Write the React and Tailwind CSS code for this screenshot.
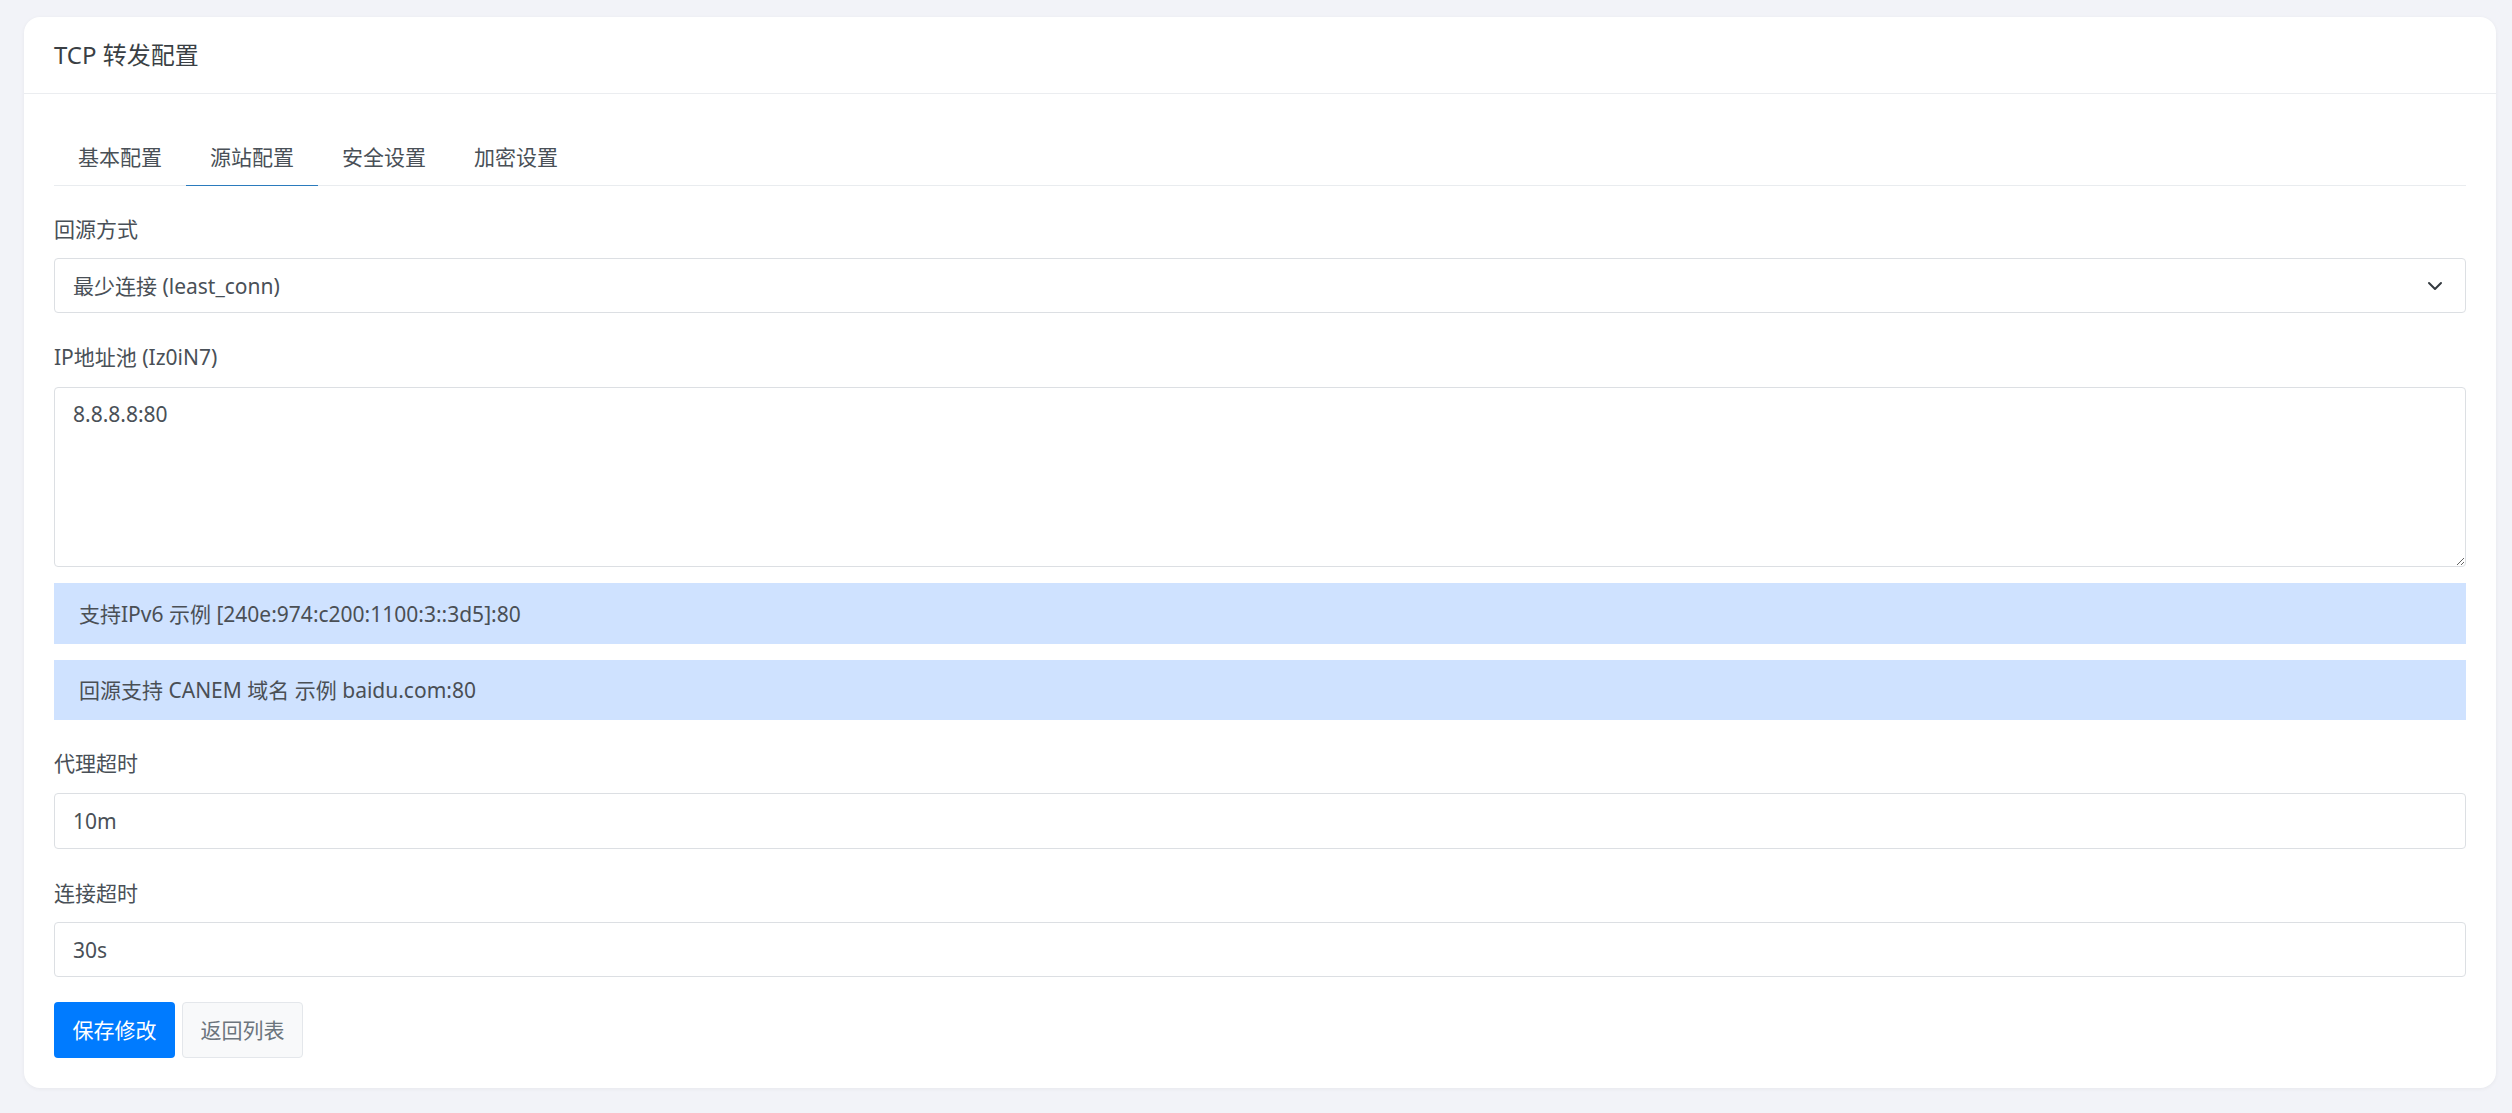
import React from "react";

const FONT = { fontFamily: '"Noto Sans", "Noto Sans CJK SC", sans-serif' };

function Label({ children, className = "" }) {
  return (
    <div className={`text-[21px] leading-[30px] text-[#495057] ${className}`}>{children}</div>
  );
}

export default function App() {
  const tabs = ["基本配置", "源站配置", "安全设置", "加密设置"];
  return (
    <div className="min-h-screen bg-[#f2f3f8] pt-[17px] pl-[24px] pr-[16px] pb-[25px]" style={FONT}>
      <div className="rounded-[16px] bg-white shadow-[0_1px_4px_rgba(0,0,0,0.05)]">
        <div className="border-b border-[#ebedf0] px-[30px] py-[20px] text-[24px] leading-[36px] text-[#3a3f44]">
          TCP 转发配置
        </div>
        <div className="px-[30px] pt-[35px] pb-[30px]">
          <div className="flex border-b border-[#e9ecef]">
            {tabs.map((t, i) => (
              <div
                key={t}
                className={
                  i === 1
                    ? "-mb-px border-b border-[#2b7bbd] px-[24px] py-[13px] text-[21px] leading-[30px] text-[#495057]"
                    : "px-[24px] py-[13px] text-[21px] leading-[30px] text-[#495057]"
                }
              >
                {t}
              </div>
            ))}
          </div>

          <Label className="mt-[28px]">回源方式</Label>
          <div className="relative mt-[14px]">
            <select
              defaultValue="least_conn"
              className="h-[55px] w-full appearance-none rounded-[4px] border border-[#dcdfe3] bg-white px-[18px] text-[21px] leading-[30px] text-[#495057] outline-none"
              style={FONT}
            >
              <option value="least_conn">最少连接 (least_conn)</option>
            </select>
            <svg
              className="pointer-events-none absolute right-[23px] top-[20px]"
              width="16"
              height="16"
              viewBox="0 0 16 16"
              fill="none"
              stroke="#343a40"
              strokeWidth="2"
              strokeLinecap="round"
              strokeLinejoin="round"
            >
              <path d="M2 5l6 6 6-6" />
            </svg>
          </div>

          <Label className="mt-[29px]">IP地址池 (Iz0iN7)</Label>
          <textarea
            defaultValue="8.8.8.8:80"
            className="mt-[15px] block h-[180px] w-full rounded-[4px] border border-[#dcdfe3] bg-white px-[18px] pt-[11px] text-[21px] leading-[30px] text-[#495057] outline-none"
            style={FONT}
          />

          <div className="mt-[16px] flex h-[61px] items-center bg-[#cfe2ff] px-[25px] text-[21px] leading-[30px] text-[#4a4f55]">
            支持IPv6 示例 [240e:974:c200:1100:3::3d5]:80
          </div>
          <div className="mt-[16px] flex h-[60px] items-center bg-[#cfe2ff] px-[25px] text-[21px] leading-[30px] text-[#4a4f55]">
            回源支持 CANEM 域名 示例 baidu.com:80
          </div>

          <Label className="mt-[28px]">代理超时</Label>
          <input
            defaultValue="10m"
            className="mt-[15px] block h-[56px] w-full rounded-[4px] border border-[#dcdfe3] bg-white px-[18px] text-[21px] leading-[30px] text-[#495057] outline-none"
            style={FONT}
          />

          <Label className="mt-[29px]">连接超时</Label>
          <input
            defaultValue="30s"
            className="mt-[14px] block h-[55px] w-full rounded-[4px] border border-[#dcdfe3] bg-white px-[18px] text-[21px] leading-[30px] text-[#495057] outline-none"
            style={FONT}
          />

          <div className="mt-[25px] flex gap-[7px]">
            <button
              className="h-[56px] w-[121px] rounded-[4px] bg-[#007bff] text-[21px] leading-[30px] text-white"
              style={FONT}
            >
              保存修改
            </button>
            <button
              className="h-[56px] w-[121px] rounded-[4px] border border-[#e4e7eb] bg-[#f8f9fa] text-[21px] leading-[30px] text-[#6c757d]"
              style={FONT}
            >
              返回列表
            </button>
          </div>
        </div>
      </div>
    </div>
  );
}
